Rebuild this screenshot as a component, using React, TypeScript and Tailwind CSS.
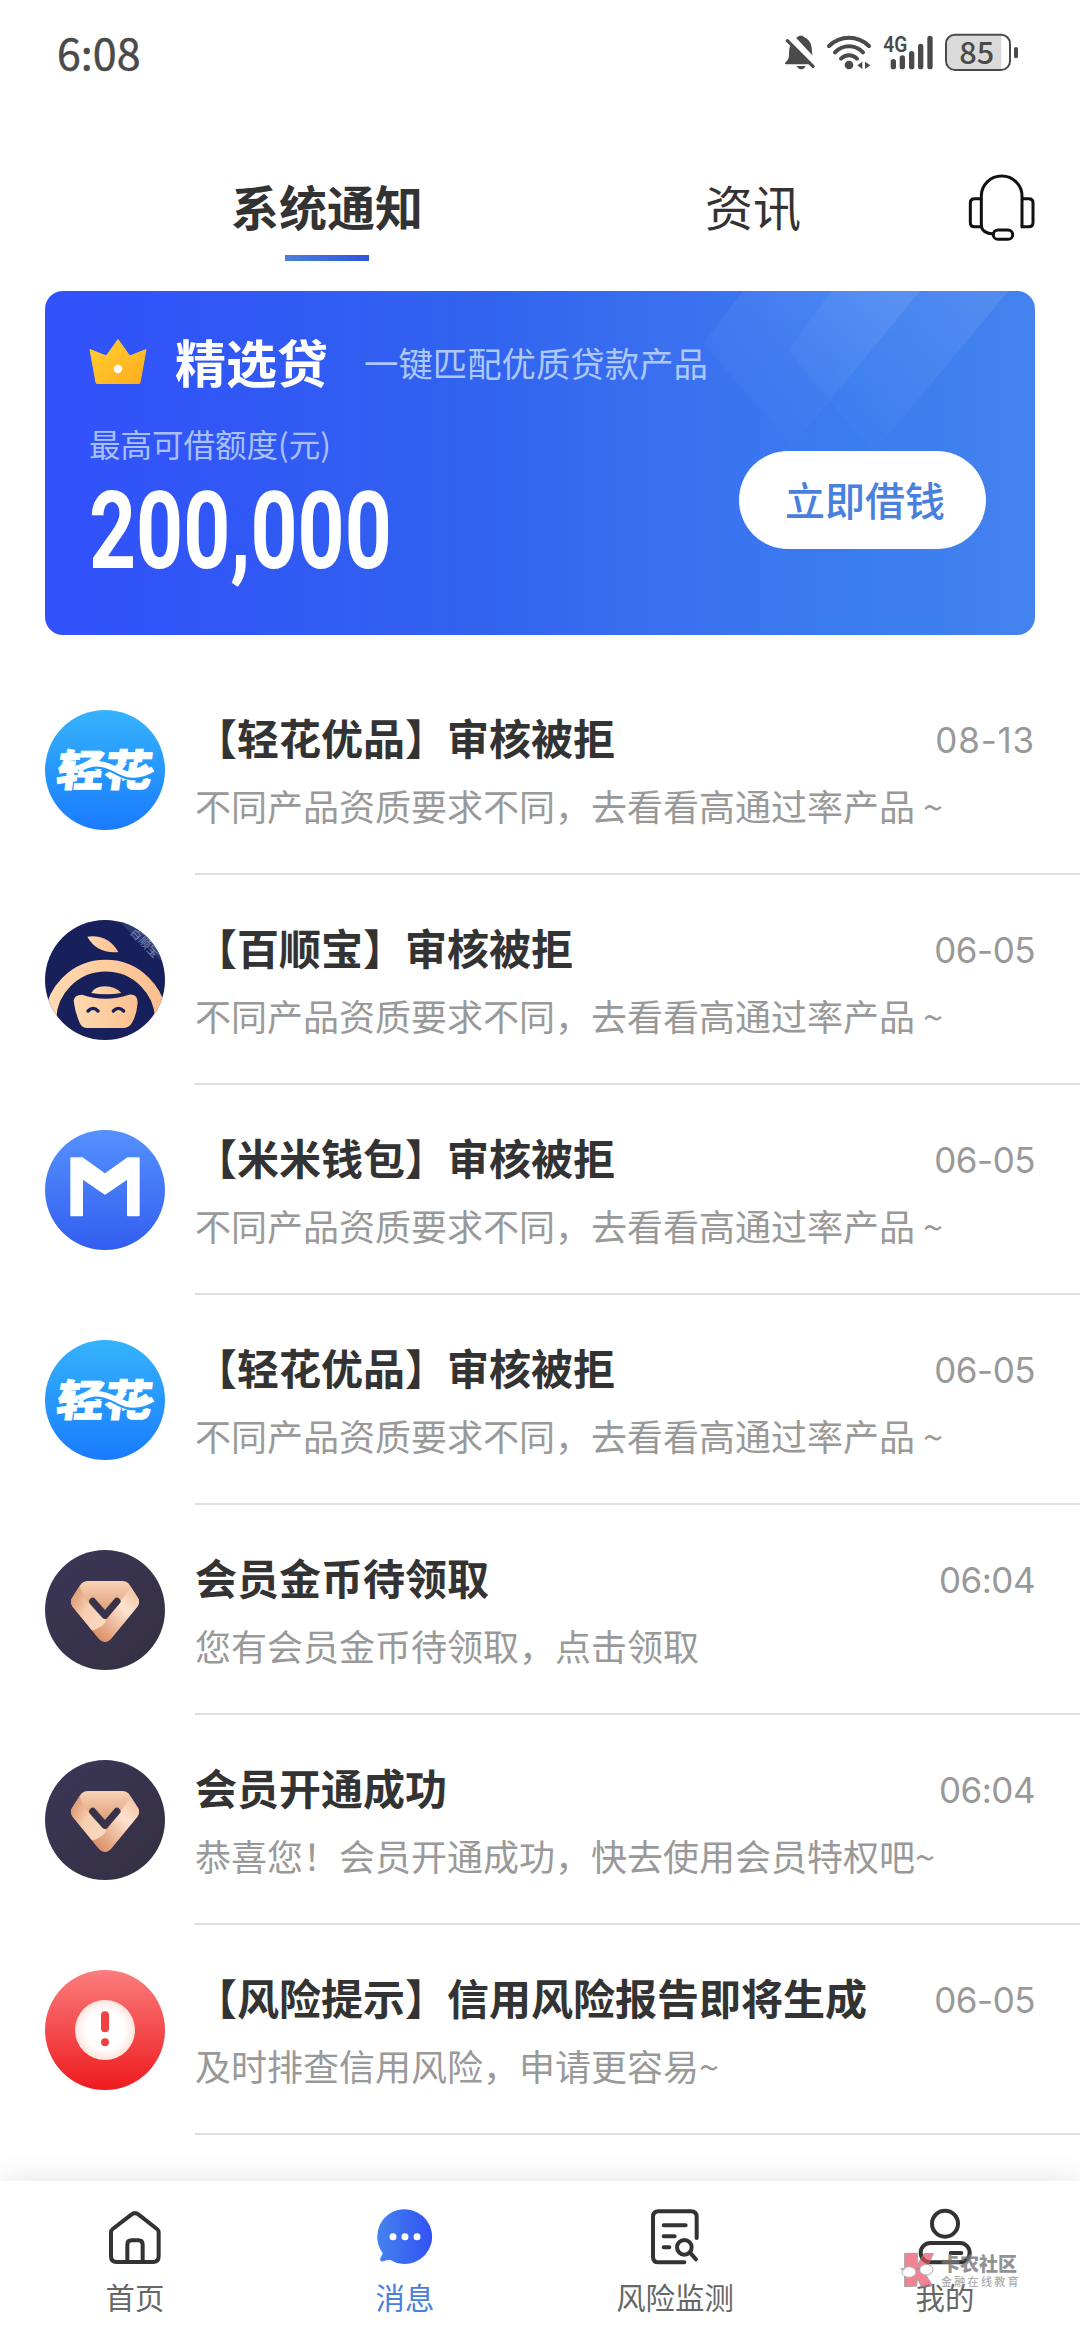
import React from "react";
import clsx from "clsx";

type AvatarKind = "qinghua" | "baishun" | "mimi" | "member" | "risk";

interface Message {
    avatar: AvatarKind;
    title: string;
    desc: string;
    date: string;
}

const productDesc = "不同产品资质要求不同，去看看高通过率产品 ~";

const messages: Message[] = [
    { avatar: "qinghua", title: "【轻花优品】审核被拒", desc: productDesc, date: "08-13" },
    { avatar: "baishun", title: "【百顺宝】审核被拒", desc: productDesc, date: "06-05" },
    { avatar: "mimi", title: "【米米钱包】审核被拒", desc: productDesc, date: "06-05" },
    { avatar: "qinghua", title: "【轻花优品】审核被拒", desc: productDesc, date: "06-05" },
    { avatar: "member", title: "会员金币待领取", desc: "您有会员金币待领取，点击领取", date: "06:04" },
    { avatar: "member", title: "会员开通成功", desc: "恭喜您！会员开通成功，快去使用会员特权吧~", date: "06:04" },
    { avatar: "risk", title: "【风险提示】信用风险报告即将生成", desc: "及时排查信用风险，申请更容易~", date: "06-05" },
];

const StatusIcons = () => (
    <svg className="h-[70px] w-[280px]" viewBox="0 0 840 210" fill="none">
        {/* muted bell */}
        <path
            d="M108 56c4-2 9-4 9-6h12c0 3 5 5 10 8 10 7 15 17 16 29l2 22zM90 80l68 56H78c-4 0-4-6 0-8 7-5 9-11 9-22 0-10 1-18 3-26z"
            fill="#4a4a4a"
        />
        <path d="M82 65l77 77" stroke="#4a4a4a" strokeWidth="10" strokeLinecap="round" />
        <path d="M110 141h27c-3 7-8 10-13 10s-11-3-14-10z" fill="#4a4a4a" />
        {/* wifi */}
        <g stroke="#4a4a4a" strokeWidth="12" strokeLinecap="round">
            <path d="M207 81c34-33 86-33 120 0" />
            <path d="M225 100c24-24 60-24 84 0" />
            <path d="M243 119c14-14 34-14 48 0" />
        </g>
        <circle cx="267" cy="138" r="13" fill="#4a4a4a" />
        <path d="M307 128v22l-15-11zM315 128v22l16-11z" fill="#4a4a4a" />
        {/* signal */}
        <text
            x="370"
            y="98"
            fontSize="64"
            fontWeight="600"
            textLength="72"
            lengthAdjust="spacingAndGlyphs"
            fill="#4a4a4a"
            className="font-['Roboto',sans-serif]"
        >
            4G
        </text>
        <g stroke="#4a4a4a" strokeWidth="16" strokeLinecap="round">
            <path d="M400 128v15M427 117v26M455 104v39M482 82v61M510 58v85" />
        </g>
        {/* battery */}
        <rect x="558" y="47" width="192" height="106" rx="27" fill="#fff" />
        <path d="M585 50h139v100h-139q-24 0-24-24v-52q0-24 24-24z" fill="#dadada" />
        <rect x="558" y="47" width="192" height="106" rx="27" stroke="#4a4a4a" strokeWidth="6" />
        <rect x="762" y="84" width="12" height="34" rx="6" fill="#4a4a4a" />
        <text
            x="650"
            y="134"
            fontSize="92"
            fontWeight="500"
            textAnchor="middle"
            fill="#4a4a4a"
            className="font-['Noto_Sans_CJK_SC',sans-serif]"
        >
            85
        </text>
    </svg>
);

const HeadsetIcon = () => (
    <svg className="h-[68px] w-[68px]" viewBox="86 72 204 204" fill="none" stroke="#111" strokeWidth="9">
        <path d="M126 230V138a61 60 0 0 1 122 0v92" />
        <path d="M126 146h-20q-13 0-13 12v60q0 12 13 12h20q4 20 36 22" />
        <path d="M248 146h20q13 0 13 12v60q0 12-13 12h-24" />
        <rect x="162" y="240" width="58" height="28" rx="14" />
    </svg>
);

const CrownIcon = () => (
    <svg className="h-[46px] w-[58px]" viewBox="0 0 58 46">
        <defs>
            <linearGradient id="crown" x1="0" y1="0" x2="1" y2="1">
                <stop offset="0" stopColor="#ffd02f" />
                <stop offset="1" stopColor="#ffac1e" />
            </linearGradient>
        </defs>
        <path
            d="M29 1.5l11 15.5q1 1 2 .5l15-6-6 33q0 1-1 1H8q-1 0-1-1L1 11.5l15 6q1 .5 2-.5z"
            fill="url(#crown)"
            stroke="url(#crown)"
            strokeWidth="1"
            strokeLinejoin="round"
        />
        <circle cx="29" cy="31" r="4.2" fill="#fff" />
    </svg>
);

const QinghuaAvatar = () => (
    <svg className="h-[120px] w-[120px]" viewBox="0 0 120 120">
        <defs>
            <linearGradient id="qh" x1="0" y1="0" x2="0" y2="1">
                <stop offset="0" stopColor="#35b3fc" />
                <stop offset="1" stopColor="#1a7bfe" />
            </linearGradient>
        </defs>
        <circle cx="60" cy="60" r="60" fill="url(#qh)" />
        <text
            transform="translate(10 76) skewX(-8)"
            fontSize="43"
            fontWeight="900"
            textLength="95"
            lengthAdjust="spacingAndGlyphs"
            fill="#fff"
            stroke="#fff"
            strokeWidth="1"
            className="font-['Noto_Sans_CJK_SC',sans-serif]"
        >
            轻花
        </text>
        <path d="M38 60c14-8 25-3 36 3s22 6 34-1" fill="none" stroke="#2497fd" strokeWidth="6" />
        <path d="M37 58c14-8 26-3 37 3s22 5 34-2" fill="none" stroke="#fff" strokeWidth="5.5" />
    </svg>
);

const BaishunAvatar = () => (
    <svg className="h-[120px] w-[120px]" viewBox="45 60 360 360">
        <defs>
            <clipPath id="bs-clip">
                <circle cx="225" cy="240" r="180" />
            </clipPath>
            <linearGradient id="bs" x1="0" y1="0" x2="1" y2="0">
                <stop offset="0" stopColor="#ffd9b0" />
                <stop offset="1" stopColor="#fcbf8e" />
            </linearGradient>
        </defs>
        <g clipPath="url(#bs-clip)">
            <rect x="45" y="60" width="360" height="360" fill="#17205a" />
            <path d="M262 60l150 140V60z" fill="#2c3a70" />
            <text
                transform="translate(298 98) rotate(46)"
                fontSize="36"
                fill="#7d88b0"
                className="font-['Noto_Sans_CJK_SC',sans-serif]"
            >
                百顺宝
            </text>
            <path d="M172 110q62-8 93 46-64 6-93-46z" fill="url(#bs)" />
            <circle cx="227" cy="363" r="166" fill="none" stroke="url(#bs)" strokeWidth="35" />
            <path d="M184 279q10-20 41-20t49 20q-44 8-90 0z" fill="url(#bs)" />
            <path
                d="M156 284q70 24 141 0 26-3 26 24-3 38-18 62-8 14-26 14H173q-18 0-24-16-14-32-18-66 2-18 25-18z"
                fill="url(#bs)"
            />
            <path
                d="M174 333q15-16 30 0M250 333q15-16 31 0"
                fill="none"
                stroke="#17205a"
                strokeWidth="10"
                strokeLinecap="round"
            />
        </g>
    </svg>
);

const MimiAvatar = () => (
    <svg className="h-[120px] w-[120px]" viewBox="45 60 360 360">
        <defs>
            <linearGradient id="mm" x1="0" y1="0" x2="0" y2="1">
                <stop offset="0" stopColor="#5591fd" />
                <stop offset="1" stopColor="#325ef0" />
            </linearGradient>
        </defs>
        <circle cx="225" cy="240" r="180" fill="url(#mm)" />
        <path
            d="M124 145h33l68 49 68-49h33v171h-32V204l-69 47-69-47v112h-32z"
            fill="#fff"
            stroke="#fff"
            strokeWidth="6"
            strokeLinejoin="round"
        />
    </svg>
);

const MemberAvatar = () => (
    <svg className="h-[120px] w-[120px]" viewBox="45 60 360 360">
        <defs>
            <linearGradient id="mb-bg" x1="0" y1="0" x2="1" y2="1">
                <stop offset="0" stopColor="#3c3658" />
                <stop offset="1" stopColor="#343041" />
            </linearGradient>
            <linearGradient id="mb-l" x1="0" y1=".2" x2="1" y2=".8">
                <stop offset="0" stopColor="#d98f66" />
                <stop offset=".5" stopColor="#f7cfb2" />
                <stop offset="1" stopColor="#f9dac2" />
            </linearGradient>
            <linearGradient id="mb-r" x1="1" y1="0" x2=".2" y2="1">
                <stop offset="0" stopColor="#f0b894" />
                <stop offset=".4" stopColor="#fce3cf" />
                <stop offset="1" stopColor="#d9895f" />
            </linearGradient>
            <linearGradient id="mb-t" x1="0" y1="0" x2="0" y2="1">
                <stop offset="0" stopColor="#fbd5b9" />
                <stop offset=".5" stopColor="#dd9c75" />
                <stop offset="1" stopColor="#dd9c75" />
            </linearGradient>
            <clipPath id="mb-gem">
                <path d="M174 153h103q14 0 22 12l25 39q8 13-2 26l-79 97q-18 18-36 0l-79-97q-10-13-2-26l25-39q8-12 23-12z" />
            </clipPath>
        </defs>
        <circle cx="225" cy="240" r="180" fill="url(#mb-bg)" />
        <g clipPath="url(#mb-gem)">
            <rect x="120" y="150" width="210" height="190" fill="url(#mb-t)" />
            <path d="M148 165q20 60 82 106-8 22-44 31l-70-82z" fill="url(#mb-l)" />
            <path d="M306 168q-48 62-76 103-12 22-44 31l39 45 110-130z" fill="url(#mb-r)" />
        </g>
        <path
            d="M188 214l37 42 36-42"
            fill="none"
            stroke="#37324a"
            strokeWidth="21"
            strokeLinecap="round"
            strokeLinejoin="round"
        />
    </svg>
);

const RiskAvatar = () => (
    <svg className="h-[120px] w-[120px]" viewBox="45 60 360 360">
        <defs>
            <linearGradient id="rk" x1="0" y1="0" x2="0" y2="1">
                <stop offset="0" stopColor="#fb7d7d" />
                <stop offset="1" stopColor="#ee1a1e" />
            </linearGradient>
            <radialGradient id="rk-in">
                <stop offset=".65" stopColor="#fff" />
                <stop offset="1" stopColor="#fde3dc" />
            </radialGradient>
        </defs>
        <circle cx="225" cy="240" r="180" fill="url(#rk)" />
        <circle cx="225" cy="240" r="90" fill="url(#rk-in)" />
        <rect x="213" y="184" width="24" height="63" rx="12" fill="#ee4146" />
        <circle cx="225" cy="277" r="12" fill="#ee4146" />
    </svg>
);

const avatars: Record<AvatarKind, React.FC> = {
    qinghua: QinghuaAvatar,
    baishun: BaishunAvatar,
    mimi: MimiAvatar,
    member: MemberAvatar,
    risk: RiskAvatar,
};

const HomeIcon = () => (
    <svg className="h-[56px] w-[56px]" viewBox="140 116 168 168" fill="none" stroke="#333" strokeWidth="12">
        <path d="M152 186q0-6 5-10l56-43q11-9 22 0l55 43q5 4 5 10v72q0 17-17 17h-109q-17 0-17-17z" />
        <path d="M201 275v-52q0-13 13-13h20q13 0 13 13v52" />
    </svg>
);

const MessageIcon = () => (
    <svg className="h-[56px] w-[56px]" viewBox="950 116 168 168">
        <defs>
            <linearGradient id="msg" x1="0" y1="0" x2="1" y2="0">
                <stop offset="0" stopColor="#4583ee" />
                <stop offset="1" stopColor="#3152f4" />
            </linearGradient>
        </defs>
        <path
            d="M1033 117a82 82 0 1 1-44 151q-10 0-20 5-12 2-9-9 7-11 7-16a82 82 0 0 1 66-131z"
            fill="url(#msg)"
        />
        <circle cx="998" cy="199" r="10.5" fill="#fff" />
        <circle cx="1034" cy="199" r="10.5" fill="#fff" />
        <circle cx="1070" cy="199" r="10.5" fill="#fff" />
    </svg>
);

const MonitorIcon = () => (
    <svg
        className="h-[56px] w-[56px]"
        viewBox="200 116 168 168"
        fill="none"
        stroke="#333"
        strokeWidth="12"
        strokeLinecap="round"
    >
        <path d="M349 203v-63q0-17-17-17h-97q-17 0-17 17v119q0 17 17 17h77" />
        <path d="M250 165h66M250 198h33M250 231h17M331 249l16 18" />
        <circle cx="312" cy="231" r="22" />
    </svg>
);

const MineIcon = () => (
    <svg
        className="h-[56px] w-[56px]"
        viewBox="1009 116 168 168"
        fill="none"
        stroke="#333"
        strokeWidth="12"
        strokeLinecap="round"
        overflow="visible"
    >
        <circle cx="1093" cy="160" r="39" />
        <rect x="1020" y="218" width="147" height="58" rx="29" />
        <path d="M1110 248h32" />
    </svg>
);

const tabs = [
    { label: "首页", icon: HomeIcon, active: false },
    { label: "消息", icon: MessageIcon, active: true },
    { label: "风险监测", icon: MonitorIcon, active: false },
    { label: "我的", icon: MineIcon, active: false },
];

const Banner = () => (
    <div className="relative mx-[45px] mt-[30px] flex h-[344px] justify-between overflow-hidden rounded-[18px] bg-[linear-gradient(90deg,#3151fc_0%,#3159f5_22%,#3164ee_45%,#3a6ff0_62%,#3a7df0_82%,#4482ee_100%)]">
        <svg className="absolute top-0 right-0 h-[344px] w-[375px]" viewBox="0 33 1125 1032">
            <defs>
                <linearGradient id="ray" x1="1" y1="0" x2=".2" y2="1">
                    <stop offset="0" stopColor="#fff" stopOpacity=".09" />
                    <stop offset="1" stopColor="#fff" stopOpacity="0" />
                </linearGradient>
            </defs>
            <path d="M250 33h530L395 500 130 190z" fill="url(#ray)" />
            <path d="M515 33h530L640 520 385 210z" fill="url(#ray)" />
        </svg>
        <div className="relative pt-[35px] pl-[44px]">
            <div className="flex h-[70px] items-center">
                <CrownIcon />
                <span className="ml-[28px] text-[51px] font-bold text-white">精选贷</span>
                <span className="mt-[4px] ml-[36px] text-[34.4px] text-[#adc8fa]">一键匹配优质贷款产品</span>
            </div>
            <div className="mt-[27px] h-[40px] text-[31.5px] leading-[40px] text-[#a9c0fa]">最高可借额度(元)</div>
            <div className="mt-[20px] h-[96px] w-max origin-left scale-x-[0.76] font-['Roboto',sans-serif] text-[108px] leading-[96px] font-bold text-white">
                200,000
            </div>
        </div>
        <button className="relative mt-[160px] mr-[49px] h-[98px] w-[247px] rounded-full bg-white pb-[3px] pl-[5px] text-[40px] font-medium text-[#4a80dd]">
            立即借钱
        </button>
    </div>
);

const MessageRow = ({ avatar, title, desc, date }: Message) => {
    const Avatar = avatars[avatar];
    return (
        <div className="flex h-[210px] pl-[45px]">
            <div className="mt-[45px] mr-[30px] shrink-0">
                <Avatar />
            </div>
            <div className="flex-1 border-b-2 border-[#dedede] pt-[42px] pr-[45px]">
                <div className="flex items-center justify-between">
                    <h3 className="h-[60px] text-[42px] leading-[60px] font-bold whitespace-nowrap text-[#333]">
                        {title}
                    </h3>
                    {/* narrow 1 needs wider tracking to keep the column aligned */}
                    <span
                        className={clsx(
                            "mt-[6px] font-['Inter',sans-serif] text-[35px] text-[#999]",
                            date.includes("1") ? "tracking-[0.8px]" : "tracking-[-0.5px]"
                        )}
                    >
                        {date}
                    </span>
                </div>
                <p className="mt-[13px] text-[36px] leading-[50px] whitespace-nowrap text-[#999]">{desc}</p>
            </div>
        </div>
    );
};

const Watermark = () => (
    <div className="absolute top-[71px] left-[900px] flex opacity-80">
        <svg className="h-[36px] w-[36px]" viewBox="960 248 108 108">
            <path
                d="M974 252h38v34l20-33h28l-26 58 24 38-34 3-12-26-2 24-36 2z"
                fill="#ee4a62"
                fillOpacity=".85"
                stroke="#8a8a8a"
                strokeWidth="3"
            />
            <ellipse cx="987" cy="308" rx="21" ry="16" fill="#fff" stroke="#999" strokeWidth="3" />
            <ellipse cx="1039" cy="301" rx="20" ry="16" fill="#fff" stroke="#999" strokeWidth="3" />
            <path d="M962 298l12 2M1008 300q6-6 11 0" fill="none" stroke="#777" strokeWidth="4" />
        </svg>
        <div className="ml-[5px] text-[#777]">
            <div className="h-[21px] text-[19px] leading-[21px] font-black whitespace-nowrap">卡农社区</div>
            <div className="mt-px h-[14px] text-[11px] leading-[14px] font-medium tracking-[2.3px] whitespace-nowrap text-[#999]">
                金融在线教育
            </div>
        </div>
    </div>
);

const App = () => {
    return (
        <div className="flex h-[2340px] w-[1080px] flex-col overflow-hidden bg-white font-['Noto_Sans_CJK_SC',sans-serif]">
            <div className="flex h-[108px] items-center justify-between pr-[40px] pl-[57px]">
                <span className="mb-[6px] text-[43px] text-[#4a4a4a] [-webkit-text-stroke:0.5px_#4a4a4a]">6:08</span>
                <StatusIcons />
            </div>

            <div className="mt-[66px] flex h-[87px] pl-[114px]">
                <div className="flex w-[426px] flex-col items-center">
                    <span className="text-[48px] leading-[62px] font-bold text-[#333]">系统通知</span>
                    <span className="mt-[19px] h-[6px] w-[84px] bg-linear-to-r from-[#4a80dd] to-[#3154dd]" />
                </div>
                <div className="flex w-[426px] flex-col items-center">
                    <span className="text-[48px] leading-[62px] text-[#333]">资讯</span>
                </div>
                <div className="ml-[2px]">
                    <HeadsetIcon />
                </div>
            </div>

            <Banner />

            <div className="mt-[30px] flex-1">
                {messages.map((message, index) => (
                    <MessageRow key={index} {...message} />
                ))}
            </div>

            <nav className="relative flex h-[159px] shrink-0 bg-white shadow-[0_0_30px_rgba(0,0,0,0.11)]">
                {tabs.map(({ label, icon: Icon, active }) => (
                    <div key={label} className="flex flex-1 flex-col items-center pt-[28px]">
                        <Icon />
                        <span
                            className={clsx(
                                "mt-[13px] text-[29.4px] leading-[36px]",
                                active ? "text-[#4a80dd]" : "text-[#666]"
                            )}
                        >
                            {label}
                        </span>
                    </div>
                ))}
                <Watermark />
            </nav>
        </div>
    );
};

export default App;
